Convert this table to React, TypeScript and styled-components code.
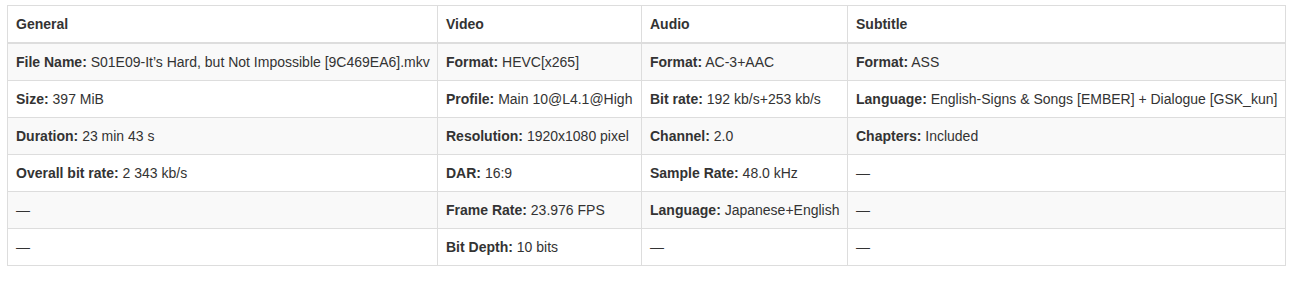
import * as React from "react";
import styled, { createGlobalStyle } from "styled-components";

const GlobalStyle = createGlobalStyle`
	body {
		margin: 0;
		background: #fff;
		font-family: "Liberation Sans", Arial, Helvetica, sans-serif;
		font-size: 14px;
		color: #333;
	}
`;

const Wrapper = styled.div`
	padding: 5px 14px 0 7px;
`;

const Table = styled.table`
	width: 1279px;
	border-collapse: collapse;
	border-spacing: 0;
	table-layout: fixed;
	border: 1px solid #ddd;
`;

const HeadCell = styled.th`
	text-align: left;
	font-weight: bold;
	padding: 8px;
	line-height: 20px;
	border: 1px solid #ddd;
	border-bottom: 2px solid #ddd;
	white-space: nowrap;
`;

const Row = styled.tr<{ $striped: boolean }>`
	background: ${(p) => (p.$striped ? "#f9f9f9" : "#fff")};
`;

const Cell = styled.td`
	padding: 8px;
	line-height: 20px;
	border: 1px solid #ddd;
	white-space: nowrap;
`;

const Label = styled.b`
	font-weight: bold;
`;

type Entry = [string, string] | null;

const columns = [
	{ title: "General", width: 430 },
	{ title: "Video", width: 204 },
	{ title: "Audio", width: 206 },
	{ title: "Subtitle", width: 438 },
];

const rows: Entry[][] = [
	[
		["File Name", "S01E09-It\u2019s Hard, but Not Impossible [9C469EA6].mkv"],
		["Format", "HEVC[x265]"],
		["Format", "AC-3+AAC"],
		["Format", "ASS"],
	],
	[
		["Size", "397 MiB"],
		["Profile", "Main 10@L4.1@High"],
		["Bit rate", "192 kb/s+253 kb/s"],
		["Language", "English-Signs & Songs [EMBER] + Dialogue [GSK_kun]"],
	],
	[
		["Duration", "23 min 43 s"],
		["Resolution", "1920x1080 pixel"],
		["Channel", "2.0"],
		["Chapters", "Included"],
	],
	[
		["Overall bit rate", "2 343 kb/s"],
		["DAR", "16:9"],
		["Sample Rate", "48.0 kHz"],
		null,
	],
	[null, ["Frame Rate", "23.976 FPS"], ["Language", "Japanese+English"], null],
	[null, ["Bit Depth", "10 bits"], null, null],
];

export default function App() {
	return (
		<>
			<GlobalStyle />
			<Wrapper>
				<Table>
					<colgroup>
						{columns.map((c) => (
							<col key={c.title} style={{ width: c.width }} />
						))}
					</colgroup>
					<thead>
						<tr>
							{columns.map((c) => (
								<HeadCell key={c.title}>{c.title}</HeadCell>
							))}
						</tr>
					</thead>
					<tbody>
						{rows.map((row, i) => (
							<Row key={i} $striped={i % 2 === 0}>
								{row.map((entry, j) => (
									<Cell key={j}>
										{entry ? (
											<>
												<Label>{entry[0]}:</Label> {entry[1]}
											</>
										) : (
											"\u2014"
										)}
									</Cell>
								))}
							</Row>
						))}
					</tbody>
				</Table>
			</Wrapper>
		</>
	);
}
